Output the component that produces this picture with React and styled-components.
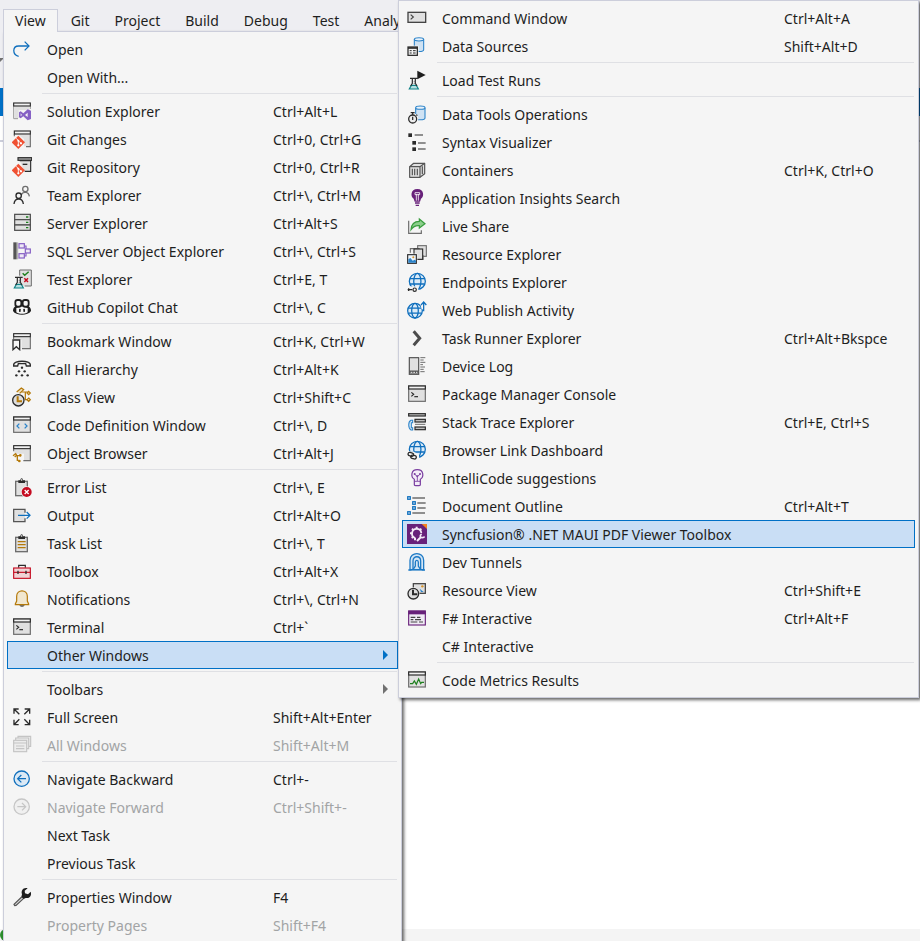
import React from 'react'
import styled, { createGlobalStyle } from 'styled-components'

const dark = '#2b2b2b'
const gray = '#6e6e6e'
const fillGray = '#e0e0e0'
const blue = '#0f6fbd'
const gold = '#b4790a'
const purple = '#68217a'
const violet = '#8661c5'
const red = '#c50b20'
const green = '#1f801f'
const teal = '#0f8387'

/* ---------- shared icon pieces, all drawn on a 60 x 60 grid ---------- */

const Win = ({ y = 6, bottom = 52 }) => (
  <g>
    <rect x="5" y={y} width="50" height={bottom - y} fill={fillGray} stroke={gray} strokeWidth="3.6" />
    <rect x="5" y={y} width="50" height="9" fill="#f2f2f2" stroke={dark} strokeWidth="3.6" />
  </g>
)

const Globe = ({ cx, cy, r }) => (
  <g fill="none" stroke={blue} strokeWidth="3.8">
    <circle cx={cx} cy={cy} r={r} fill="#dcebf7" />
    <ellipse cx={cx} cy={cy} rx={r * 0.45} ry={r} />
    <path d={`M${cx - r + 2} ${cy - r / 3}H${cx + r - 2}M${cx - r + 2} ${cy + r / 3}H${cx + r - 2}`} />
  </g>
)

const Flask = () => (
  <g>
    <path d="M13 46L7 57H34L28 46Z" fill="#b6dfe0" stroke={teal} strokeWidth="3.6" />
    <path d="M9 25H32M16 25V40L11 48M25 25V40L30 48" fill="none" stroke={dark} strokeWidth="3.6" />
    <path d="M20 34H25M20 40H25" stroke={gray} strokeWidth="2.4" />
  </g>
)

const Cylinder = ({ x, y }) => (
  <g transform={`translate(${x} ${y})`} stroke="#2b83c9" strokeWidth="3.2">
    <path d="M2 6V37C2 44 30 44 30 37V6" fill="#cfe2f3" />
    <ellipse cx="16" cy="6" rx="14" ry="5" fill="#e9f2fa" />
  </g>
)

const Diamond = ({ cy }) => (
  <g>
    <path d={`M19 ${cy - 20}L39 ${cy}L19 ${cy + 20}L-1 ${cy}Z`} fill="#f05133" />
    <path
      d={`M13 ${cy - 12}L19 ${cy - 5}V${cy + 9}M19 ${cy - 5}L27 ${cy + 3}`}
      fill="none"
      stroke="#fff"
      strokeWidth="2.6"
    />
    <circle cx="19" cy={cy - 5} r="3" fill="#fff" />
    <circle cx="19" cy={cy + 9} r="3.4" fill="#fff" />
    <circle cx="27" cy={cy + 3} r="3.4" fill="#fff" />
  </g>
)

const Clipboard = () => (
  <g>
    <rect x="11" y="13" width="35" height="43" fill={fillGray} stroke={gray} strokeWidth="4" />
    <path d="M19 18V10H25C25 2 33 2 33 10H39V18Z" fill={dark} />
    <circle cx="29" cy="9" r="2.4" fill="#fff" />
  </g>
)

const Prompt = ({ y }) => (
  <g fill="none" stroke={dark} strokeWidth="3.6">
    <path d={`M13 ${y}L20 ${y + 6}L13 ${y + 12}`} />
    <path d={`M22 ${y + 13}H33`} />
  </g>
)

const icons = {
  open: (
    <g fill="none" stroke={blue} strokeWidth="3.8">
      <path d="M20 52C0 47 1 21 20 21H51" />
      <path d="M38 8L51 21L38 34" />
    </g>
  ),
  solution: (
    <g>
      <path d="M5 15V53H18M55 15V24" fill="none" stroke="#9a9a9a" strokeWidth="3" />
      <path d="M7 17H53V27H20V51H7Z" fill={fillGray} />
      <rect x="5" y="6" width="50" height="9" fill="#f2f2f2" stroke={dark} strokeWidth="3.4" />
      <path
        fillRule="evenodd"
        d="M47 25L57 29V54L47 58L34 46L26 52L21 49V34L26 31L34 37ZM47 35L39 42L47 48ZM26 37V46L30 42Z"
        fill={violet}
      />
    </g>
  ),
  gitChanges: (
    <g>
      <path d="M8 17H55V52H36V30L20 18Z" fill={fillGray} />
      <path d="M55 15V53H42M7 15V22" fill="none" stroke={gray} strokeWidth="3.4" />
      <rect x="7" y="6" width="48" height="9" fill="#f2f2f2" stroke={dark} strokeWidth="3.4" />
      <Diamond cy={40} />
    </g>
  ),
  gitRepo: (
    <g>
      <path d="M23 11H56V43H38" fill={fillGray} stroke={dark} strokeWidth="3.4" />
      <rect x="18" y="2" width="41" height="8" fill="#9a9a9a" stroke={dark} strokeWidth="3.4" />
      <path d="M32 22H46" stroke={dark} strokeWidth="4" />
      <Diamond cy={40} />
    </g>
  ),
  team: (
    <g fill="none" strokeWidth="4">
      <g stroke={gray}>
        <circle cx="40" cy="12" r="8" />
        <path d="M28 29C32 19 50 19 52 34" />
      </g>
      <g stroke={dark}>
        <circle cx="20" cy="32" r="8" />
        <path d="M6 57C8 37 32 37 34 57" />
      </g>
    </g>
  ),
  server: (
    <g fill={fillGray} stroke="#4c4c4c" strokeWidth="3.6">
      <rect x="8" y="4" width="47" height="16" />
      <rect x="8" y="20" width="47" height="16" />
      <rect x="8" y="36" width="47" height="16" />
      <path d="M42 12H49M42 28H49M42 44H49" stroke={green} strokeWidth="4" />
    </g>
  ),
  sql: (
    <g>
      <rect x="4" y="4" width="10" height="51" fill="#555" />
      <path d="M17 4V55" stroke="#a8a8a8" strokeWidth="3" />
      <g fill="#eee8f5" stroke={violet} strokeWidth="3.6">
        <path d="M36 15H42V26M36 45H42V34" fill="none" />
        <rect x="21" y="8" width="16" height="13" />
        <rect x="40" y="24" width="15" height="12" />
        <rect x="21" y="38" width="16" height="13" />
      </g>
    </g>
  ),
  test: (
    <g>
      <rect x="23" y="3" width="35" height="48" fill={fillGray} />
      <path d="M23 20V3H58V51H38" fill="none" stroke={gray} strokeWidth="3" />
      <path d="M32 13L38 19L50 8" fill="none" stroke={green} strokeWidth="4.4" />
      <path d="M37 28L48 39M48 28L37 39" stroke={red} strokeWidth="4.4" />
      <Flask />
    </g>
  ),
  copilot: (
    <g>
      <path d="M10 28C5 32 3 35 3 42C12 57 48 57 57 42C57 35 55 32 50 28Z" fill="#1e1e1e" />
      <path d="M13 33C24 31 27 31 30 28C33 31 36 31 47 33V46C37 52 23 52 13 46Z" fill="#f5f5f5" />
      <rect x="21" y="35" width="5" height="10" rx="2" fill="#1e1e1e" />
      <rect x="34" y="35" width="5" height="10" rx="2" fill="#1e1e1e" />
      <rect x="10" y="9" width="18" height="20" rx="7" fill="#f5f5f5" stroke="#1e1e1e" strokeWidth="5.4" />
      <rect x="32" y="9" width="18" height="20" rx="7" fill="#f5f5f5" stroke="#1e1e1e" strokeWidth="5.4" />
    </g>
  ),
  bookmark: (
    <g>
      <path d="M8 19H54V52H29V27H8Z" fill={fillGray} />
      <path d="M55 18V53H30M5 18V24" fill="none" stroke={gray} strokeWidth="3.4" />
      <rect x="5" y="8" width="50" height="9" fill="#f2f2f2" stroke={dark} strokeWidth="3.4" />
      <path d="M3 27H23V56L13 47L3 56Z" fill="#f5f5f5" stroke={dark} strokeWidth="4" />
    </g>
  ),
  call: (
    <g fill={dark}>
      <path
        d="M5 18C4 3 56 3 55 18V21H43L41 14H19L17 21H5Z"
        fill="#f5f5f5"
        stroke={dark}
        strokeWidth="4"
      />
      <circle cx="30" cy="26" r="3.6" />
      <circle cx="21" cy="37" r="3.6" />
      <circle cx="38" cy="37" r="3.6" />
      <circle cx="13" cy="49" r="3.6" />
      <circle cx="30" cy="49" r="3.6" />
      <circle cx="47" cy="49" r="3.6" />
    </g>
  ),
  classView: (
    <g>
      <g fill="#f2e3c1" stroke={gold} strokeWidth="3.6">
        <path d="M14 15L28 3L35 8L23 19" />
        <path d="M28 15H47M40 15V38H47" fill="none" />
        <path d="M50 13L55 18L50 23L45 18Z" />
        <path d="M50 33L55 38L50 43L45 38Z" />
      </g>
      <circle cx="19" cy="40" r="17" fill="#dedede" stroke={dark} strokeWidth="4" />
      <path d="M17 28V43H30" fill="none" stroke={gold} strokeWidth="6" />
    </g>
  ),
  codeDef: (
    <g>
      <Win />
      <path d="M22 26L15 33L22 40M38 26L45 33L38 40" fill="none" stroke="#2b83c9" strokeWidth="3.8" />
    </g>
  ),
  objectBrowser: (
    <g>
      <path d="M7 19H54V52H36V32H7Z" fill={fillGray} />
      <path d="M55 18V53H34M5 18V25" fill="none" stroke={gray} strokeWidth="3.4" />
      <rect x="5" y="8" width="50" height="9" fill="#f2f2f2" stroke={dark} strokeWidth="3.4" />
      <g fill="none" stroke={gold} strokeWidth="4">
        <path d="M3 38L11 32L14 37L8 42M12 38H27M16 38V52H20" />
        <circle cx="25" cy="37" r="2" />
        <circle cx="22" cy="54" r="2" />
      </g>
    </g>
  ),
  errorList: (
    <g>
      <Clipboard />
      <circle cx="44" cy="45" r="17" fill="#f5f5f5" />
      <circle cx="44" cy="45" r="15" fill={red} />
      <path d="M38 39L50 51M50 39L38 51" stroke="#fff" strokeWidth="4" />
    </g>
  ),
  output: (
    <g>
      <path d="M39 23V13H5V50H39V40" fill={fillGray} stroke="#555" strokeWidth="3.8" />
      <path d="M18 31H54M44 21L54 31L44 41" fill="none" stroke={blue} strokeWidth="3.8" />
    </g>
  ),
  taskList: (
    <g>
      <Clipboard />
      <path d="M17 26H41M17 35H41M17 44H41" stroke={gold} strokeWidth="3.6" />
    </g>
  ),
  toolbox: (
    <g>
      <path d="M20 20V13H40V20" fill="none" stroke={dark} strokeWidth="3.6" />
      <rect x="5" y="21" width="50" height="31" fill="#f0d3d6" stroke={red} strokeWidth="3.4" />
      <path d="M5 34H55" stroke={red} strokeWidth="3.4" />
      <path d="M18 29V39M42 29V39" stroke={dark} strokeWidth="4" />
    </g>
  ),
  bell: (
    <g>
      <path d="M22 48C24 56 36 56 38 48Z" fill={gray} />
      <path
        d="M14 36V22C14 0 46 0 46 22V36L50 45V47H10V45Z"
        fill="#f1e7cf"
        stroke={gold}
        strokeWidth="3.6"
      />
    </g>
  ),
  terminal: (
    <g>
      <Win />
      <Prompt y={25} />
    </g>
  ),
  fullScreen: (
    <g fill="none" stroke={dark} strokeWidth="4">
      <path d="M6 20V6H20M6 6L22 22M38 6H53V20M53 6L37 22" />
      <path d="M6 38V53H20M6 53L22 37M38 53H53V38M53 53L37 37" />
    </g>
  ),
  allWindows: (
    <g fill="#ececec" stroke="#c4c4c4" strokeWidth="3.4">
      <path d="M18 9V4H56V34H51" />
      <path d="M11 15V9H50V41H45" />
      <rect x="5" y="16" width="39" height="34" />
      <path d="M5 24H44M12 33H37M12 41H37" />
    </g>
  ),
  back: (
    <g fill="none" stroke={blue} strokeWidth="3.8">
      <circle cx="29" cy="29" r="23" fill="#dbe9f5" />
      <path d="M42 29H17M28 18L17 29L28 40" />
    </g>
  ),
  forward: (
    <g fill="none" stroke="#c6c6c6" strokeWidth="3.8">
      <circle cx="29" cy="29" r="23" fill="#f0f0f0" />
      <path d="M16 29H41M30 18L41 29L30 40" />
    </g>
  ),
  wrench: (
    <g>
      <path d="M29 30L6 52L8 56L12 55L35 34" fill="#d8d8d8" stroke="#555" strokeWidth="3.6" />
      <path
        d="M47 4C35 0 26 10 30 22L28 30L35 36L41 33C53 35 60 25 56 14L48 22L39 19L38 11Z"
        fill="#1e1e1e"
      />
    </g>
  ),
  command: (
    <g>
      <rect x="3" y="13" width="53" height="30" fill={fillGray} stroke="#444" strokeWidth="4" />
      <path d="M11 20L19 27L11 34" fill="none" stroke="#444" strokeWidth="3.6" />
    </g>
  ),
  dataSources: (
    <g>
      <Cylinder x={20} y={4} />
      <rect x="0" y="29" width="35" height="31" fill="#f5f5f5" />
      <rect x="3" y="33" width="28" height="25" fill="#f2f2f2" stroke={dark} strokeWidth="3.8" />
      <path d="M3 36H31" stroke={dark} strokeWidth="5" />
      <path d="M8 44H14M18 44H26M8 51H14M18 51H26" stroke={dark} strokeWidth="3" />
    </g>
  ),
  loadTest: (
    <g>
      <Flask />
      <path d="M31 2L56 15L31 28Z" fill="#1e1e1e" />
    </g>
  ),
  dataTools: (
    <g>
      <Cylinder x={24} y={5} />
      <circle cx="17" cy="44" r="17" fill="#f5f5f5" />
      <circle cx="17" cy="45" r="12" fill="#ececec" stroke={dark} strokeWidth="3.8" />
      <path d="M17 38V48M17 33V26M11 26H23M28 32L31 35" stroke={dark} strokeWidth="3.8" />
    </g>
  ),
  syntax: (
    <g fill={dark}>
      <rect x="4" y="4" width="11" height="11" />
      <rect x="16" y="27" width="11" height="11" />
      <rect x="16" y="46" width="11" height="11" />
      <path d="M23 9H48M33 33H56M33 51H56" stroke={gray} strokeWidth="4" />
    </g>
  ),
  containers: (
    <g fill={fillGray} stroke="#555" strokeWidth="3.6" strokeLinejoin="round">
      <path d="M8 20L20 10H53V41L39 52H8Z" />
      <path d="M8 20H39V52M39 20L53 10" fill="none" />
      <path d="M16 26V46M23 26V46M31 26V46M46 19V42" />
    </g>
  ),
  insights: (
    <g>
      <path d="M31 3C10 3 10 27 20 32L23 41H39L42 32C52 27 52 3 31 3Z" fill={purple} />
      <path d="M24 14H38V20H24ZM28 18V38M34 18V38" fill="none" stroke="#fff" strokeWidth="2.4" />
      <path d="M24 45H38M26 52H36" stroke={purple} strokeWidth="4" />
    </g>
  ),
  liveShare: (
    <g>
      <path d="M5 14V52H43V43" fill="none" stroke={gray} strokeWidth="3.6" />
      <path
        d="M37 9L54 23L37 36V29C27 28 18 32 12 41C13 26 22 16 37 16Z"
        fill="#8bcf8b"
        stroke="#3a9d3f"
        strokeWidth="3.6"
      />
    </g>
  ),
  resourceExplorer: (
    <g fill={fillGray} strokeWidth="3.4">
      <rect x="32" y="5" width="26" height="32" stroke={gray} />
      <path d="M10 26V14H38M48 34V46H32" fill="none" stroke={gray} />
      <rect x="21" y="15" width="26" height="31" stroke={dark} />
      <rect x="0" y="29" width="31" height="31" fill="#f5f5f5" />
      <rect x="2" y="32" width="26" height="26" fill="#eef5fb" stroke={dark} />
      <path d="M4 46L10 42L17 50L23 47L27 50V56H4Z" fill="#2b83c9" />
      <circle cx="19" cy="40" r="3" fill="#d6932a" />
    </g>
  ),
  endpoints: (
    <g>
      <Globe cx={31} cy={28} r={24} />
      <rect x="0" y="43" width="34" height="17" fill="#f5f5f5" />
      <path d="M2 53H16M5 49V57" fill="none" stroke={dark} strokeWidth="4" />
      <circle cx="23" cy="53" r="5" fill="#fff" stroke={dark} strokeWidth="3.6" />
    </g>
  ),
  webPublish: (
    <g>
      <Globe cx={24} cy={32} r={22} />
      <path d="M39 8H58V28H44Z" fill="#f5f5f5" />
      <path d="M50 34V8M42 15L50 6L58 15" fill="none" stroke={blue} strokeWidth="3.8" />
    </g>
  ),
  taskRunner: <path d="M20 10L38 31L20 52" fill="none" stroke="#4c4c4c" strokeWidth="9" />,
  deviceLog: (
    <g>
      <rect x="7" y="5" width="28" height="50" fill={fillGray} stroke="#555" strokeWidth="3.6" />
      <path d="M7 48H35" stroke="#555" strokeWidth="9" />
      <path d="M11 49H16M19 49H24M27 49H31" stroke="#f0f0f0" strokeWidth="3" />
      <path
        d="M40 5H55M40 12H50M40 19H55M40 26H48M40 33H54M40 40H50M40 47H53"
        stroke={gray}
        strokeWidth="3"
      />
    </g>
  ),
  stackTrace: (
    <g>
      <g fill="#bcbcbc" stroke={dark} strokeWidth="3.6">
        <rect x="5" y="5" width="50" height="7" />
        <rect x="24" y="22" width="31" height="8" />
        <rect x="24" y="45" width="31" height="8" />
      </g>
      <path d="M24 37H55" stroke={gray} strokeWidth="3" />
      <path
        d="M17 25H12C3 29 3 49 12 54H17V47H13V32H17Z"
        fill="#dcebf7"
        stroke="#2b83c9"
        strokeWidth="3.2"
      />
    </g>
  ),
  browserLink: (
    <g>
      <Globe cx={31} cy={28} r={24} />
      <path d="M0 34H18L36 44V60H0Z" fill="#f5f5f5" />
      <g fill="none" stroke={dark} strokeWidth="3.8">
        <rect x="3" y="38" width="17" height="10" rx="5" transform="rotate(15 11 43)" />
        <rect x="11" y="46" width="17" height="10" rx="5" transform="rotate(15 19 51)" />
      </g>
    </g>
  ),
  intelliCode: (
    <g fill="none" stroke="#7a3ea0" strokeWidth="3.6">
      <path d="M31 5C11 5 11 27 22 34V50C22 54 40 54 40 50V34C51 27 51 5 31 5Z" fill="#f3ebf8" />
      <path d="M22 40H40M31 39V24M23 19L31 25L39 19" strokeWidth="2.6" />
      <g fill="#7a3ea0" stroke="none">
        <circle cx="23" cy="18" r="3" />
        <circle cx="31" cy="25" r="3" />
        <circle cx="39" cy="18" r="3" />
      </g>
    </g>
  ),
  outline: (
    <g>
      <g fill="#a9cdea" stroke={blue} strokeWidth="3.4">
        <rect x="2" y="2" width="8" height="8" />
        <rect x="17" y="17" width="8" height="8" />
        <rect x="17" y="32" width="8" height="8" />
        <rect x="2" y="47" width="8" height="8" />
      </g>
      <path d="M16 6H54M31 21H56M31 36H56M16 51H54" stroke={gray} strokeWidth="4" />
    </g>
  ),
  syncfusion: (
    <g>
      <rect width="60" height="60" fill={purple} />
      <path d="M44 0H60V15Z" fill="#f58220" />
      <g fill="none" stroke="#f3e9f5">
        <path d="M25 42A14 14 0 1 1 43 27" strokeWidth="5.4" />
        <path d="M29 8V15M15 14L20 19M9 28H15M14 42L20 38M24 49V42M43 14L38 19" strokeWidth="6" />
        <path d="M30 51L42 39" strokeWidth="6" />
        <path d="M44 30C35 35 42 46 53 38" strokeWidth="5" />
      </g>
    </g>
  ),
  tunnels: (
    <g fill="#d3e5f5" stroke="#1b78c4" strokeWidth="3.8">
      <path d="M4 54H12V53H46V54H54" />
      <path d="M9 53V25C9 -2 50 -2 50 25V53Z" />
      <path d="M18 53V27C18 10 41 10 41 27V53" />
      <path d="M18 53L25 42V31C25 23 34 23 34 31V42L41 53Z" />
    </g>
  ),
  resourceView: (
    <g>
      <rect x="19" y="11" width="36" height="29" fill={fillGray} stroke="#444" strokeWidth="3.8" />
      <circle cx="46" cy="19" r="3.6" fill="#d6932a" />
      <path d="M38 26L50 36H42Z" fill="#2b83c9" />
      <circle cx="19" cy="41" r="19" fill="#f5f5f5" />
      <circle cx="19" cy="41" r="16" fill="#dedede" stroke={dark} strokeWidth="4" />
      <path d="M18 29V43H31" fill="none" stroke={dark} strokeWidth="6" />
    </g>
  ),
  fsharp: (
    <g>
      <rect x="5" y="9" width="50" height="42" fill="#f0ebf5" stroke={purple} strokeWidth="3.4" />
      <rect x="4" y="8" width="52" height="11" fill={purple} />
      <path d="M11 28H25M30 28H40M11 35H19M24 35H42M11 42H31M36 42H48" stroke="#444" strokeWidth="3.4" />
    </g>
  ),
  metrics: (
    <g>
      <Win y={6} bottom={51} />
      <path d="M9 41H17L22 33L28 43L35 27L41 41L44 37H51" fill="none" stroke={green} strokeWidth="3.6" />
    </g>
  ),
}

/* ---------- menu contents ---------- */

const menuBar = ['View', 'Git', 'Project', 'Build', 'Debug', 'Test', 'Analyze']

const viewMenu = [
  [
    { icon: 'open', label: 'Open' },
    { label: 'Open With...' },
  ],
  [
    { icon: 'solution', label: 'Solution Explorer', keys: 'Ctrl+Alt+L' },
    { icon: 'gitChanges', label: 'Git Changes', keys: 'Ctrl+0, Ctrl+G' },
    { icon: 'gitRepo', label: 'Git Repository', keys: 'Ctrl+0, Ctrl+R' },
    { icon: 'team', label: 'Team Explorer', keys: 'Ctrl+\\, Ctrl+M' },
    { icon: 'server', label: 'Server Explorer', keys: 'Ctrl+Alt+S' },
    { icon: 'sql', label: 'SQL Server Object Explorer', keys: 'Ctrl+\\, Ctrl+S' },
    { icon: 'test', label: 'Test Explorer', keys: 'Ctrl+E, T' },
    { icon: 'copilot', label: 'GitHub Copilot Chat', keys: 'Ctrl+\\, C' },
  ],
  [
    { icon: 'bookmark', label: 'Bookmark Window', keys: 'Ctrl+K, Ctrl+W' },
    { icon: 'call', label: 'Call Hierarchy', keys: 'Ctrl+Alt+K' },
    { icon: 'classView', label: 'Class View', keys: 'Ctrl+Shift+C' },
    { icon: 'codeDef', label: 'Code Definition Window', keys: 'Ctrl+\\, D' },
    { icon: 'objectBrowser', label: 'Object Browser', keys: 'Ctrl+Alt+J' },
  ],
  [
    { icon: 'errorList', label: 'Error List', keys: 'Ctrl+\\, E' },
    { icon: 'output', label: 'Output', keys: 'Ctrl+Alt+O' },
    { icon: 'taskList', label: 'Task List', keys: 'Ctrl+\\, T' },
    { icon: 'toolbox', label: 'Toolbox', keys: 'Ctrl+Alt+X' },
    { icon: 'bell', label: 'Notifications', keys: 'Ctrl+\\, Ctrl+N' },
    { icon: 'terminal', label: 'Terminal', keys: 'Ctrl+`' },
    { label: 'Other Windows', submenu: true, active: true },
  ],
  [
    { label: 'Toolbars', submenu: true },
    { icon: 'fullScreen', label: 'Full Screen', keys: 'Shift+Alt+Enter' },
    { icon: 'allWindows', label: 'All Windows', keys: 'Shift+Alt+M', disabled: true },
  ],
  [
    { icon: 'back', label: 'Navigate Backward', keys: 'Ctrl+-' },
    { icon: 'forward', label: 'Navigate Forward', keys: 'Ctrl+Shift+-', disabled: true },
    { label: 'Next Task' },
    { label: 'Previous Task' },
  ],
  [
    { icon: 'wrench', label: 'Properties Window', keys: 'F4' },
    { label: 'Property Pages', keys: 'Shift+F4', disabled: true },
  ],
]

const otherWindows = [
  [
    { icon: 'command', label: 'Command Window', keys: 'Ctrl+Alt+A' },
    { icon: 'dataSources', label: 'Data Sources', keys: 'Shift+Alt+D' },
  ],
  [{ icon: 'loadTest', label: 'Load Test Runs' }],
  [
    { icon: 'dataTools', label: 'Data Tools Operations' },
    { icon: 'syntax', label: 'Syntax Visualizer' },
    { icon: 'containers', label: 'Containers', keys: 'Ctrl+K, Ctrl+O' },
    { icon: 'insights', label: 'Application Insights Search' },
    { icon: 'liveShare', label: 'Live Share' },
    { icon: 'resourceExplorer', label: 'Resource Explorer' },
    { icon: 'endpoints', label: 'Endpoints Explorer' },
    { icon: 'webPublish', label: 'Web Publish Activity' },
    { icon: 'taskRunner', label: 'Task Runner Explorer', keys: 'Ctrl+Alt+Bkspce' },
    { icon: 'deviceLog', label: 'Device Log' },
    { icon: 'terminal', label: 'Package Manager Console' },
    { icon: 'stackTrace', label: 'Stack Trace Explorer', keys: 'Ctrl+E, Ctrl+S' },
    { icon: 'browserLink', label: 'Browser Link Dashboard' },
    { icon: 'intelliCode', label: 'IntelliCode suggestions' },
    { icon: 'outline', label: 'Document Outline', keys: 'Ctrl+Alt+T' },
    { icon: 'syncfusion', label: 'Syncfusion® .NET MAUI PDF Viewer Toolbox', active: true },
    { icon: 'tunnels', label: 'Dev Tunnels' },
    { icon: 'resourceView', label: 'Resource View', keys: 'Ctrl+Shift+E' },
    { icon: 'fsharp', label: 'F# Interactive', keys: 'Ctrl+Alt+F' },
    { label: 'C# Interactive' },
  ],
  [{ icon: 'metrics', label: 'Code Metrics Results' }],
]

const MenuGroups = ({ groups, keysWidth }) =>
  groups.map((group, i) => (
    <React.Fragment key={i}>
      {i > 0 && <Separator />}
      {group.map((item) => (
        <Item
          key={item.label}
          type="button"
          role="menuitem"
          disabled={item.disabled}
          $active={item.active}
          aria-haspopup={item.submenu ? 'menu' : undefined}
        >
          <Icon viewBox="0 0 60 60" aria-hidden="true">
            {item.icon && icons[item.icon]}
          </Icon>
          <Label>{item.label}</Label>
          {item.keys && <Keys $width={keysWidth}>{item.keys}</Keys>}
          {item.submenu && (
            <Arrow viewBox="0 0 5 10" $active={item.active} aria-hidden="true">
              <path d="M0 0L5 5L0 10Z" />
            </Arrow>
          )}
        </Item>
      ))}
    </React.Fragment>
  ))

const App = () => {
  return (
    <Screen>
      <GlobalStyle />
      <MenuBar role="menubar">
        {menuBar.map((name, i) => (
          <MenuTab key={name} type="button" role="menuitem" $open={i === 0}>
            {name}
          </MenuTab>
        ))}
      </MenuBar>
      <ToolbarArea>
        <Caret viewBox="0 0 6 4" aria-hidden="true">
          <path d="M-3 0H4L0 4Z" />
        </Caret>
      </ToolbarArea>
      <DocumentTabs />
      <NavigationBar />
      <Editor />
      <StatusBar>
        <StatusDot />
      </StatusBar>
      <ViewMenu role="menu" aria-label="View">
        <MenuGroups groups={viewMenu} keysWidth={124} />
      </ViewMenu>
      <OtherWindowsMenu role="menu" aria-label="Other Windows">
        <MenuGroups groups={otherWindows} keysWidth={130} />
      </OtherWindowsMenu>
    </Screen>
  )
}

export default App

const GlobalStyle = createGlobalStyle`
  * {
    box-sizing: border-box;
  }

  body {
    margin: 0;
    font-family: 'Noto Sans', 'Open Sans', sans-serif;
    font-size: 14px;
    color: #1e1e1e;
  }

  button {
    font: inherit;
    color: inherit;
  }
`

const Screen = styled.div`
  position: relative;
  display: flex;
  flex-direction: column;
  height: 100vh;
  overflow: hidden;
  background: #ffffff;
`

const MenuBar = styled.div`
  display: flex;
  align-items: flex-end;
  gap: 1px;
  height: 32px;
  padding-left: 3px;
  background: #eeeef2;
`

const MenuTab = styled.button`
  position: relative;
  z-index: ${(props) => (props.$open ? 2 : 0)};
  height: 23px;
  padding: 0 11px;
  border: 1px solid ${(props) => (props.$open ? '#cccedb' : 'transparent')};
  border-bottom: 0;
  background: ${(props) => (props.$open ? '#f5f5f5' : 'transparent')};
  line-height: 22px;
`

const ToolbarArea = styled.div`
  display: flex;
  align-items: center;
  height: 56px;
  background: #eeeef2;
`

const Caret = styled.svg`
  width: 6px;
  height: 4px;
  fill: #717171;
`

const DocumentTabs = styled.div`
  height: 28px;
  background: #0070c6;
`

const NavigationBar = styled.div`
  height: 26px;
  border-bottom: 2px solid #cccedb;
  background: #ffffff;
`

const Editor = styled.div`
  flex: 1;
  background: #ffffff;
`

const StatusBar = styled.div`
  display: flex;
  align-items: center;
  height: 12px;
  background: #f4f4f4;
`

const StatusDot = styled.span`
  width: 6px;
  height: 12px;
  border-radius: 6px 0 0 6px;
  background: #2c8f2c;
`

const Menu = styled.div`
  position: absolute;
  display: flex;
  flex-direction: column;
  padding: 3px;
  border: 1px solid #cccedb;
  background: #f5f5f5;
  box-shadow: 2px 2px 3px rgba(0, 0, 0, 0.6);
`

const ViewMenu = styled(Menu)`
  z-index: 1;
  top: 31px;
  left: 3px;
  width: 399px;
`

const OtherWindowsMenu = styled(Menu)`
  z-index: 3;
  top: 0;
  left: 398px;
  right: 1px;
`

const Item = styled.button`
  display: flex;
  align-items: center;
  gap: 15px;
  height: 28px;
  padding: 0 0 0 4px;
  border: 1px solid ${(props) => (props.$active ? '#0070c6' : 'transparent')};
  background: ${(props) => (props.$active ? '#c9def5' : 'transparent')};
  text-align: left;
  white-space: nowrap;

  &:disabled {
    color: #a2a4a5;
  }
`

const Icon = styled.svg`
  flex: none;
  width: 20px;
  height: 20px;
`

const Label = styled.span`
  flex: 1;
`

const Keys = styled.span`
  flex: none;
  width: ${(props) => props.$width}px;
`

const Arrow = styled.svg`
  flex: none;
  width: 5px;
  height: 10px;
  margin-right: 9px;
  fill: ${(props) => (props.$active ? '#0070c6' : '#717171')};
`

const Separator = styled.div`
  flex: none;
  height: 1px;
  margin: 2px 1px 3px 35px;
  background: #dfe0e4;
`
